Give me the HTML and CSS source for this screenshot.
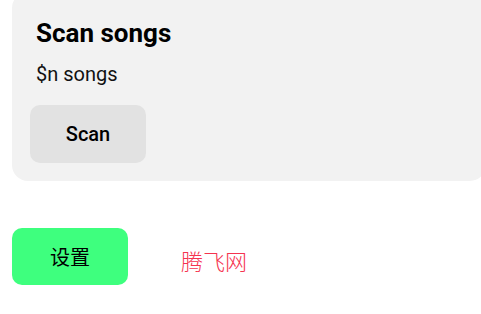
FILE: index.html
```html
<!DOCTYPE html>
<html>
<head>
  <meta charset="UTF-8">
  <title>Settings</title>
  <meta name="viewport" content="width=device-width, initial-scale=1.0">
  <link rel="stylesheet" href="styles.css">
</head>
<body>
  <!-- Scan card -->
  <div class="scan-card">
    <h2>Scan songs</h2>
    <div class="count">$n songs</div>
    <button class="btn btn-scan">Scan</button>
  </div>

  <!-- Bottom row -->
  <div class="bottom-row">
    <button class="btn btn-settings">设置</button>
    <span class="site-name">腾飞网</span>
  </div>
</body>
</html>
```

FILE: styles.css
```css
body {
  font-family: Roboto, "Noto Sans CJK SC", sans-serif;
  background-color: #fff;
  margin: 0;
  padding: 0;
  overflow: hidden;
}

/*Scan card*/
.scan-card {
  width: 474px;
  margin: -8px 0 0 12px;
  padding: 26px 0 18px 18px;
  background: #f2f2f2;
  border-radius: 16px;
  box-sizing: border-box;
}

.scan-card h2 {
  margin: 0 0 0 6px;
  font-size: 26px;
  font-weight: bold;
  line-height: 30px;
  color: #000;
}

.count {
  margin: 14px 0 0 6px;
  font-size: 20px;
  line-height: 24px;
  color: #111;
}

.btn {
  display: block;
  width: 116px;
  height: 58px;
  border: none;
  border-radius: 10px;
  cursor: pointer;
  font-family: Roboto, "Noto Sans CJK SC", sans-serif;
  color: #000;
}

.btn-scan {
  margin-top: 19px;
  background: #e2e2e2;
  font-size: 20px;
  font-weight: 500;
}

/*Bottom row*/
.bottom-row {
  display: flex;
  align-items: center;
  margin: 47px 0 0 12px;
}

.btn-settings {
  height: 57px;
  background: #3eff7e;
  font-size: 20px;
}

.site-name {
  margin: 6px 0 0 53px;
  font-size: 22px;
  font-weight: 300;
  color: #f5334f;
}
```
